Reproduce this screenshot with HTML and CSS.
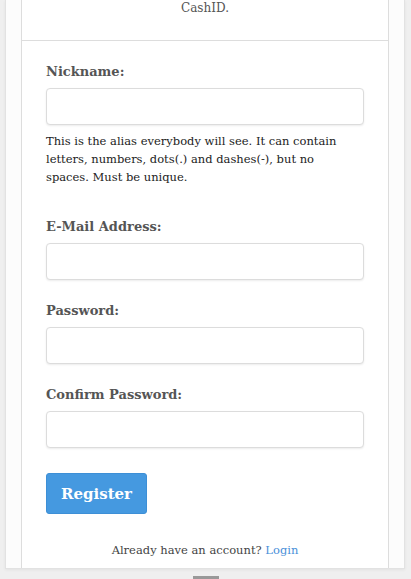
FILE: index.html
```html
<!DOCTYPE html>
<html lang="en">
<head>
    <meta charset="UTF-8">
    <meta name="viewport" content="width=device-width, initial-scale=1.0">
    <title>Register</title>
    <link rel="stylesheet" href="styles.css">
</head>
<body>

    <div class="page">
        <div class="card">
            <div class="card-header">CashID.</div>

            <form class="card-body">
                <div class="group has-help">
                    <label for="nickname">Nickname:</label>
                    <input id="nickname" type="text">
                    <p class="help">This is the alias everybody will see. It can contain letters, numbers, dots(.) and dashes(-), but no spaces. Must be unique.</p>
                </div>

                <div class="group">
                    <label for="email">E-Mail Address:</label>
                    <input id="email" type="email">
                </div>

                <div class="group">
                    <label for="password">Password:</label>
                    <input id="password" type="password">
                </div>

                <div class="group">
                    <label for="password-confirm">Confirm Password:</label>
                    <input id="password-confirm" type="password">
                </div>

                <button type="button" class="btn">Register</button>

                <p class="login">Already have an account? <a href="#">Login</a></p>
            </form>
        </div>
    </div>

    <div class="bottom">
        <span class="bar"></span>
    </div>

</body>
</html>
```

FILE: styles.css
```css
body {
    margin: 0;
    height: 579px;
    overflow: hidden;
    background-color: #efefef;
    font-family: "DejaVu Serif", serif;
    color: #222;
}

/* белая подложка страницы */
.page {
    margin: 0 6px 0 5px;
    background-color: #fcfcfc;
    border-left: 1px solid #e2e2e2;
    border-right: 1px solid #e2e2e2;
    border-bottom: 1px solid #e2e2e2;
    box-shadow: 0 1px 3px rgba(0, 0, 0, 0.06);
    padding: 0 15px;
}

.card {
    background-color: #fff;
    border-left: 1px solid #ddd;
    border-right: 1px solid #ddd;
}

.card-header {
    text-align: center;
    font-size: 12px;
    line-height: 17px;
    color: #555;
    padding-bottom: 23px;
    border-bottom: 1px solid #ddd;
}

.card-body {
    padding: 20px 24px 9px;
}

.group {
    margin-bottom: 20px;
}

.has-help {
    padding-bottom: 10px;
}

label {
    display: block;
    font-size: 13px;
    line-height: 21px;
    font-weight: bold;
    color: #555;
    margin-bottom: 6px;
}

input {
    display: block;
    box-sizing: border-box;
    width: 100%;
    height: 37px;
    margin: 0;
    border: 1px solid #dcdcdc;
    border-radius: 4px;
    background: #fff;
    box-shadow: 0 1px 2px rgba(0, 0, 0, 0.08);
}

.help {
    font-size: 11.5px;
    line-height: 18px;
    margin: 7px 0 0;
    padding-right: 18px; /* чтобы "spaces." ушло на третью строку */
    color: #222;
}

.btn {
    display: block;
    height: 41px;
    margin-top: 25px;
    padding: 0 14px;
    font-family: "DejaVu Serif", serif;
    font-size: 15px;
    font-weight: bold;
    color: #fff;
    background-color: #4599e0;
    border: 1px solid #3d8fd6;
    border-radius: 3px;
}

.login {
    margin: 27px 0 0;
    text-align: center;
    font-size: 11.5px;
    line-height: 18px;
    color: #444;
}

.login a {
    color: #4a90d9;
    text-decoration: none;
}

.bottom {
    display: flex;
    justify-content: center;
    padding-top: 7px;
}

.bar {
    width: 26px;
    height: 3px;
    background-color: #999;
}
```
